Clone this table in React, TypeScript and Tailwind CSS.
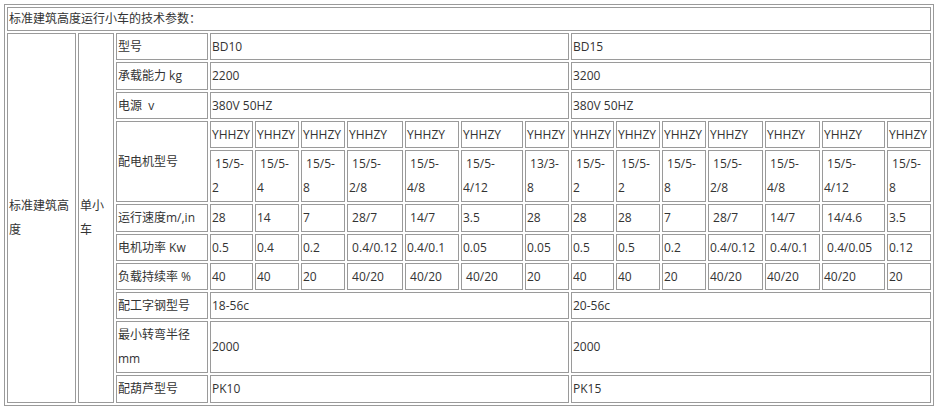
import type { ReactNode } from "react";

const sp = "\u00a0";

const motor1 = [
  `${sp}15/5-`, `${sp}15/5-`, `${sp}15/5-`, `${sp}15/5-`, `${sp}15/5-`, `${sp}15/5-`, `${sp}13/3-`,
  `${sp}15/5-`, `${sp}15/5-`, `${sp}15/5-`, `${sp}15/5-`, `${sp}15/5-`, `${sp}15/5-`, `${sp}15/5-`,
];
const motor2 = ["2", "4", "8", "2/8", "4/8", "4/12", "8", "2", "2", "8", "2/8", "4/8", "4/12", "8"];

const speed = ["28", "14", "7", `${sp}28/7`, `${sp}14/7`, "3.5", "28", "28", "28", "7", `${sp}28/7`, `${sp}14/7`, `${sp}14/4.6`, "3.5"];
const power = ["0.5", "0.4", "0.2", `${sp}0.4/0.12`, "0.4/0.1", "0.05", "0.05", "0.5", "0.5", "0.2", "0.4/0.12", `${sp}0.4/0.1`, `${sp}0.4/0.05`, "0.12"];
const load = ["40", "40", "20", `${sp}40/20`, `${sp}40/20`, `${sp}40/20`, "20", "40", "40", "20", "40/20", "40/20", "40/20", "20"];

function Cell({ children, className = "" }: { children: ReactNode; className?: string }) {
  return (
    <div className={`flex items-center border border-[#9a9a9a] px-px whitespace-nowrap ${className}`}>
      <div>{children}</div>
    </div>
  );
}

export default function App() {
  return (
    <div className="bg-white w-[937px] h-[410px] pt-[4px] pl-[4px] font-['Open_Sans','Noto_Sans_CJK_SC',sans-serif] text-[12px] leading-[24px] text-[#333]">
      <div className="w-[930px] h-[402px] border border-[#9a9a9a] p-[2px]">
        <div className="grid gap-[2px] grid-cols-[69px_36px_92px_43px_44px_44px_56px_54px_62px_44px_43px_44px_44px_55px_55px_63px_44px] grid-rows-[24px_27px_28px_27px_27px_52px_28px_27px_27px_27px_52px_28px]">
          <Cell className="col-span-17">标准建筑高度运行小车的技术参数：</Cell>

          <Cell className="row-span-11">
            标准建筑高
            <br />度
          </Cell>
          <Cell className="row-span-11">
            单小
            <br />车
          </Cell>
          <Cell>型号</Cell>
          <Cell className="col-span-7">BD10</Cell>
          <Cell className="col-span-7">BD15</Cell>

          <Cell>承载能力 kg</Cell>
          <Cell className="col-span-7">2200</Cell>
          <Cell className="col-span-7">3200</Cell>

          <Cell>电源{sp}{sp}v</Cell>
          <Cell className="col-span-7">380V 50HZ</Cell>
          <Cell className="col-span-7">380V 50HZ</Cell>

          <Cell className="row-span-2">配电机型号</Cell>
          {motor1.map((_, i) => (
            <Cell key={`y${i}`}>YHHZY</Cell>
          ))}
          {motor1.map((t, i) => (
            <Cell key={`m${i}`}>
              {t}
              <br />
              {motor2[i]}
            </Cell>
          ))}

          <Cell>运行速度m/,in</Cell>
          {speed.map((t, i) => (
            <Cell key={`s${i}`}>{t}</Cell>
          ))}

          <Cell>电机功率 Kw</Cell>
          {power.map((t, i) => (
            <Cell key={`p${i}`}>{t}</Cell>
          ))}

          <Cell>负载持续率 %</Cell>
          {load.map((t, i) => (
            <Cell key={`l${i}`}>{t}</Cell>
          ))}

          <Cell>配工字钢型号</Cell>
          <Cell className="col-span-7">18-56c</Cell>
          <Cell className="col-span-7">20-56c</Cell>

          <Cell>
            最小转弯半径
            <br />
            mm
          </Cell>
          <Cell className="col-span-7">2000</Cell>
          <Cell className="col-span-7">2000</Cell>

          <Cell>配葫芦型号</Cell>
          <Cell className="col-span-7">PK10</Cell>
          <Cell className="col-span-7">PK15</Cell>
        </div>
      </div>
    </div>
  );
}
